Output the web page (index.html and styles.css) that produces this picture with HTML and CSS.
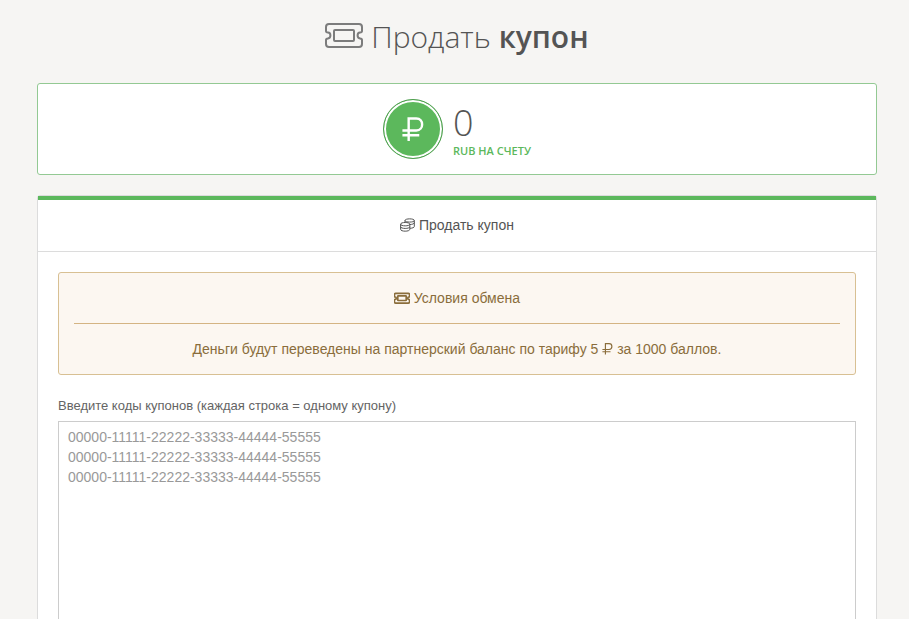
FILE: index.html
```html
<!DOCTYPE html>
<html lang="ru">
<head>
<meta charset="utf-8">
<title>Продать купон</title>
<link rel="stylesheet" href="styles.css">
</head>
<body>
<svg class="sprite" aria-hidden="true">
  <symbol id="ticket" viewBox="0 0 38 26">
    <path d="M4 2H34Q37 2 37 5V9Q37 10.4 35 10.6Q32.6 10.8 32.6 13.5Q32.6 16.2 35 16.4Q37 16.6 37 18V22Q37 25 34 25H4Q1 25 1 22V18Q1 16.6 3 16.4Q5.400 16.2 5.400 13.5Q5.400 10.8 3 10.6Q1 10.4 1 9V5Q1 2 4 2Z"/>
    <rect x="9" y="8" width="20" height="11" rx="1"/>
  </symbol>
  <symbol id="ruble" viewBox="0 0 22 26">
    <path d="M6.5 25V1.5H14.5C22.5 1.5 22.5 14 14.5 14H0M0 19H17.5"/>
  </symbol>
</svg>

<div class="container">
  <h1><svg class="icon-title"><use href="#ticket"/></svg> Продать <strong>купон</strong></h1>

  <div class="balance">
    <div class="coin"><svg class="icon-coin"><use href="#ruble"/></svg></div>
    <div class="sum">
      <span class="value">0</span>
      <span class="caption">RUB НА СЧЕТУ</span>
    </div>
  </div>

  <div class="block">
    <h2 class="block-title">
      <svg class="icon-coins" viewBox="0 0 15 14">
        <path d="M5 4.5V2.5C5 .3 14.3 .3 14.3 2.5V8.5C14.3 9.5 12.5 10.2 10 10.3M5 2.5C5 4.6 14.3 4.6 14.3 2.5M10 6.5C12 6.5 14.3 5.8 14.3 4.6"/>
        <path d="M.6 6.2C.6 3.9 9.8 3.9 9.8 6.2V11.3C9.8 13.8 .6 13.8 .6 11.3ZM.6 6.2C.6 8.4 9.8 8.4 9.8 6.2M.6 8.7C.6 11 9.8 11 9.8 8.7"/>
      </svg>
      Продать купон
    </h2>
    <form class="block-content">
      <div class="alert">
        <div><svg class="icon-alert"><use href="#ticket"/></svg> Условия обмена</div>
        <hr>
        <div>Деньги будут переведены на партнерский баланс по тарифу 5 <svg class="icon-rub"><use href="#ruble"/></svg> за 1000 баллов.</div>
      </div>
      <label for="coupons">Введите коды купонов (каждая строка = одному купону)</label>
      <textarea id="coupons" rows="15" placeholder="00000-11111-22222-33333-44444-55555
00000-11111-22222-33333-44444-55555
00000-11111-22222-33333-44444-55555"></textarea>
    </form>
  </div>
</div>
</body>
</html>
```
FILE: styles.css
```css
* { box-sizing: border-box; }
body {
  margin: 0;
  background: #f6f5f3;
  color: #545454;
  font: 14px/20px "Liberation Sans", Arial, sans-serif;
}
svg { fill: none; stroke: currentColor; }
.sprite { display: none; }

.container { padding: 17px 32px 20px 37px; }
h1 {
  margin: 0 0 26px;
  font: 300 30px/40px "Open Sans", sans-serif;
  text-align: center;
}
h1 strong { font-weight: 600; }
.icon-title {
  width: 38px;
  height: 26px;
  stroke-width: 2;
  color: #7c7c7c;
}

.balance {
  display: flex;
  justify-content: center;
  gap: 10px;
  padding: 15px 0;
  margin-bottom: 20px;
  background: #fff;
  border: 1px solid #93c993;
  border-radius: 3px;
}
.coin {
  display: flex;
  align-items: center;
  justify-content: center;
  width: 60px;
  height: 60px;
  background: #5cb85c;
  border: 1px solid #4e9e4e;
  border-radius: 50%;
  box-shadow: inset 0 0 0 2px #fff;
  color: #fff;
}
.icon-coin { width: 22px; height: 25px; stroke-width: 2.5; }
.sum { display: flex; flex-direction: column; font-family: "Open Sans", sans-serif; }
.value { font-size: 36px; font-weight: 300; line-height: 48px; }
.caption { font-size: 11px; font-weight: 600; line-height: 8px; color: #5cb85c; }

.block {
  background: #fff;
  border: 1px solid #dcdcdc;
  border-radius: 3px;
}
.block-title {
  margin: 0;
  padding: 15px 0 16px;
  border-top: 4px solid #5cb85c;
  border-bottom: 1px solid #dcdcdc;
  font-size: 14px;
  font-weight: 400;
  text-align: center;
}
.icon-coins { width: 15px; height: 14px; vertical-align: -2px; stroke-width: 1; }
.block-content { padding: 20px; }
.alert {
  padding: 15px;
  margin-bottom: 21px;
  background: #fcf7f1;
  border: 1px solid #d8c093;
  border-radius: 3px;
  color: #8a6d3b;
  text-align: center;
}
.alert hr { margin: 15px 0; border: 0; border-top: 1px solid #d4b483; }
.icon-alert { width: 16px; height: 12px; vertical-align: -1px; stroke-width: 4; }
.icon-rub { width: 11px; height: 12px; vertical-align: -1px; stroke-width: 2.5; }
label { display: block; margin-bottom: 5px; font-size: 13px; color: #646464; }
textarea {
  display: block;
  width: 100%;
  padding: 5px 9px;
  border: 1px solid #ccc;
  border-radius: 0;
  background: #fff;
  font: inherit;
  resize: none;
}
textarea::placeholder { color: #999; }
```
